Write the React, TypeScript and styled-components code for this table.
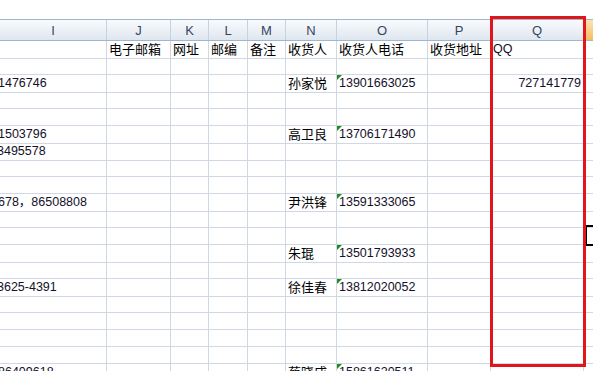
import React from 'react';
import styled, { createGlobalStyle, css } from 'styled-components';

const COLS = '107px 64px 38px 39px 38px 51px 91px 63px 93px 64px';

const GlobalStyle = createGlobalStyle`
  html, body {
    margin: 0;
    padding: 0;
    background: #fff;
    overflow: hidden;
  }
`;

const Page = styled.div`
  position: relative;
  width: 593px;
  height: 371px;
  overflow: hidden;
  background: #fff;
  font-family: "Liberation Sans", "Noto Sans CJK SC", sans-serif;
`;

const TopGap = styled.div`
  height: 19px;
`;

const HeaderRow = styled.div`
  display: grid;
  grid-template-columns: ${COLS};
  height: 20px;
  border-top: 1px solid #9eb6ce;
  border-bottom: 1px solid #9eb6ce;
`;

const HeaderCell = styled.div<{ $selected?: boolean }>`
  display: flex;
  align-items: center;
  justify-content: center;
  border-right: 1px solid #c5d2e1;
  font-size: 13px;
  color: #36465e;
  background: linear-gradient(#f8fafc 0%, #eef2f7 45%, #dfe6ef 100%);
  ${(p) =>
    p.$selected &&
    css`
      background: linear-gradient(#fbe3b4 0%, #f8d28a 50%, #f3bd5c 100%);
    `}
`;

const Row = styled.div`
  display: grid;
  grid-template-columns: ${COLS};
  height: 17px;
`;

const Cell = styled.div<{ $align?: 'left' | 'right'; $flag?: boolean; $shift?: number }>`
  position: relative;
  box-sizing: border-box;
  border-right: 1px solid #d0d7e5;
  border-bottom: 1px solid #d0d7e5;
  padding: 0 2px;
  font-size: 12.5px;
  line-height: 17px;
  color: #14102a;
  white-space: nowrap;
  text-align: ${(p) => p.$align ?? 'left'};
  text-indent: ${(p) => p.$shift ?? 0}px;

  ${(p) =>
    p.$flag &&
    css`
      &::before {
        content: '';
        position: absolute;
        left: 0;
        top: 0;
        border-top: 5px solid #1e8c1e;
        border-right: 5px solid transparent;
      }
    `}
`;

const Label = styled.span`
  display: inline-block;
  vertical-align: top;
  font-family: "Noto Sans CJK SC", sans-serif;
  font-size: 13px;
  line-height: 16px;
  color: #000;
`;

const Highlight = styled.div`
  position: absolute;
  left: 490px;
  top: 16px;
  width: 96px;
  height: 351px;
  box-sizing: border-box;
  border: 3px solid #e0161b;
  z-index: 3;
`;

const ActiveCell = styled.div`
  position: absolute;
  left: 584px;
  top: 225px;
  width: 40px;
  height: 21px;
  box-sizing: border-box;
  border: 2px solid #000;
  border-left-width: 3px;
  z-index: 2;
`;

const letters = ['I', 'J', 'K', 'L', 'M', 'N', 'O', 'P', 'Q', 'R'];

type RowData = {
  i?: string;
  iShift?: number;
  name?: string;
  phone?: string;
  qq?: string;
};

const rows: RowData[] = [
  {},
  { i: '1476746', iShift: -4, name: '孙家悦', phone: '13901663025', qq: '727141779' },
  {},
  {},
  { i: '1503796', iShift: -4, name: '高卫良', phone: '13706171490' },
  { i: '3495578', iShift: -5 },
  {},
  {},
  { i: '678，86508808', iShift: -4, name: '尹洪锋', phone: '13591333065' },
  {},
  {},
  { name: '朱琨', phone: '13501793933' },
  {},
  { i: '3625-4391', iShift: -5, name: '徐佳春', phone: '13812020052' },
  {},
  {},
  {},
  {},
  { i: '86409618', iShift: -4, name: '蔡晓成', phone: '15861620511' },
];

const labels = ['', '电子邮箱', '网址', '邮编', '备注', '收货人', '收货人电话', '收货地址'];

export default function App() {
  return (
    <Page>
      <GlobalStyle />
      <TopGap />
      <HeaderRow>
        {letters.map((l) => (
          <HeaderCell key={l} $selected={l === 'R'}>
            {l}
          </HeaderCell>
        ))}
      </HeaderRow>

      <Row>
        {labels.map((t, idx) => (
          <Cell key={idx}>{t && <Label>{t}</Label>}</Cell>
        ))}
        <Cell>QQ</Cell>
        <Cell />
      </Row>

      {rows.map((r, idx) => (
        <Row key={idx}>
          <Cell $shift={r.iShift}>{r.i}</Cell>
          <Cell />
          <Cell />
          <Cell />
          <Cell />
          <Cell>{r.name && <Label>{r.name}</Label>}</Cell>
          <Cell $flag={!!r.phone}>{r.phone}</Cell>
          <Cell />
          <Cell $align="right">{r.qq}</Cell>
          <Cell />
        </Row>
      ))}

      <ActiveCell />
      <Highlight />
    </Page>
  );
}
